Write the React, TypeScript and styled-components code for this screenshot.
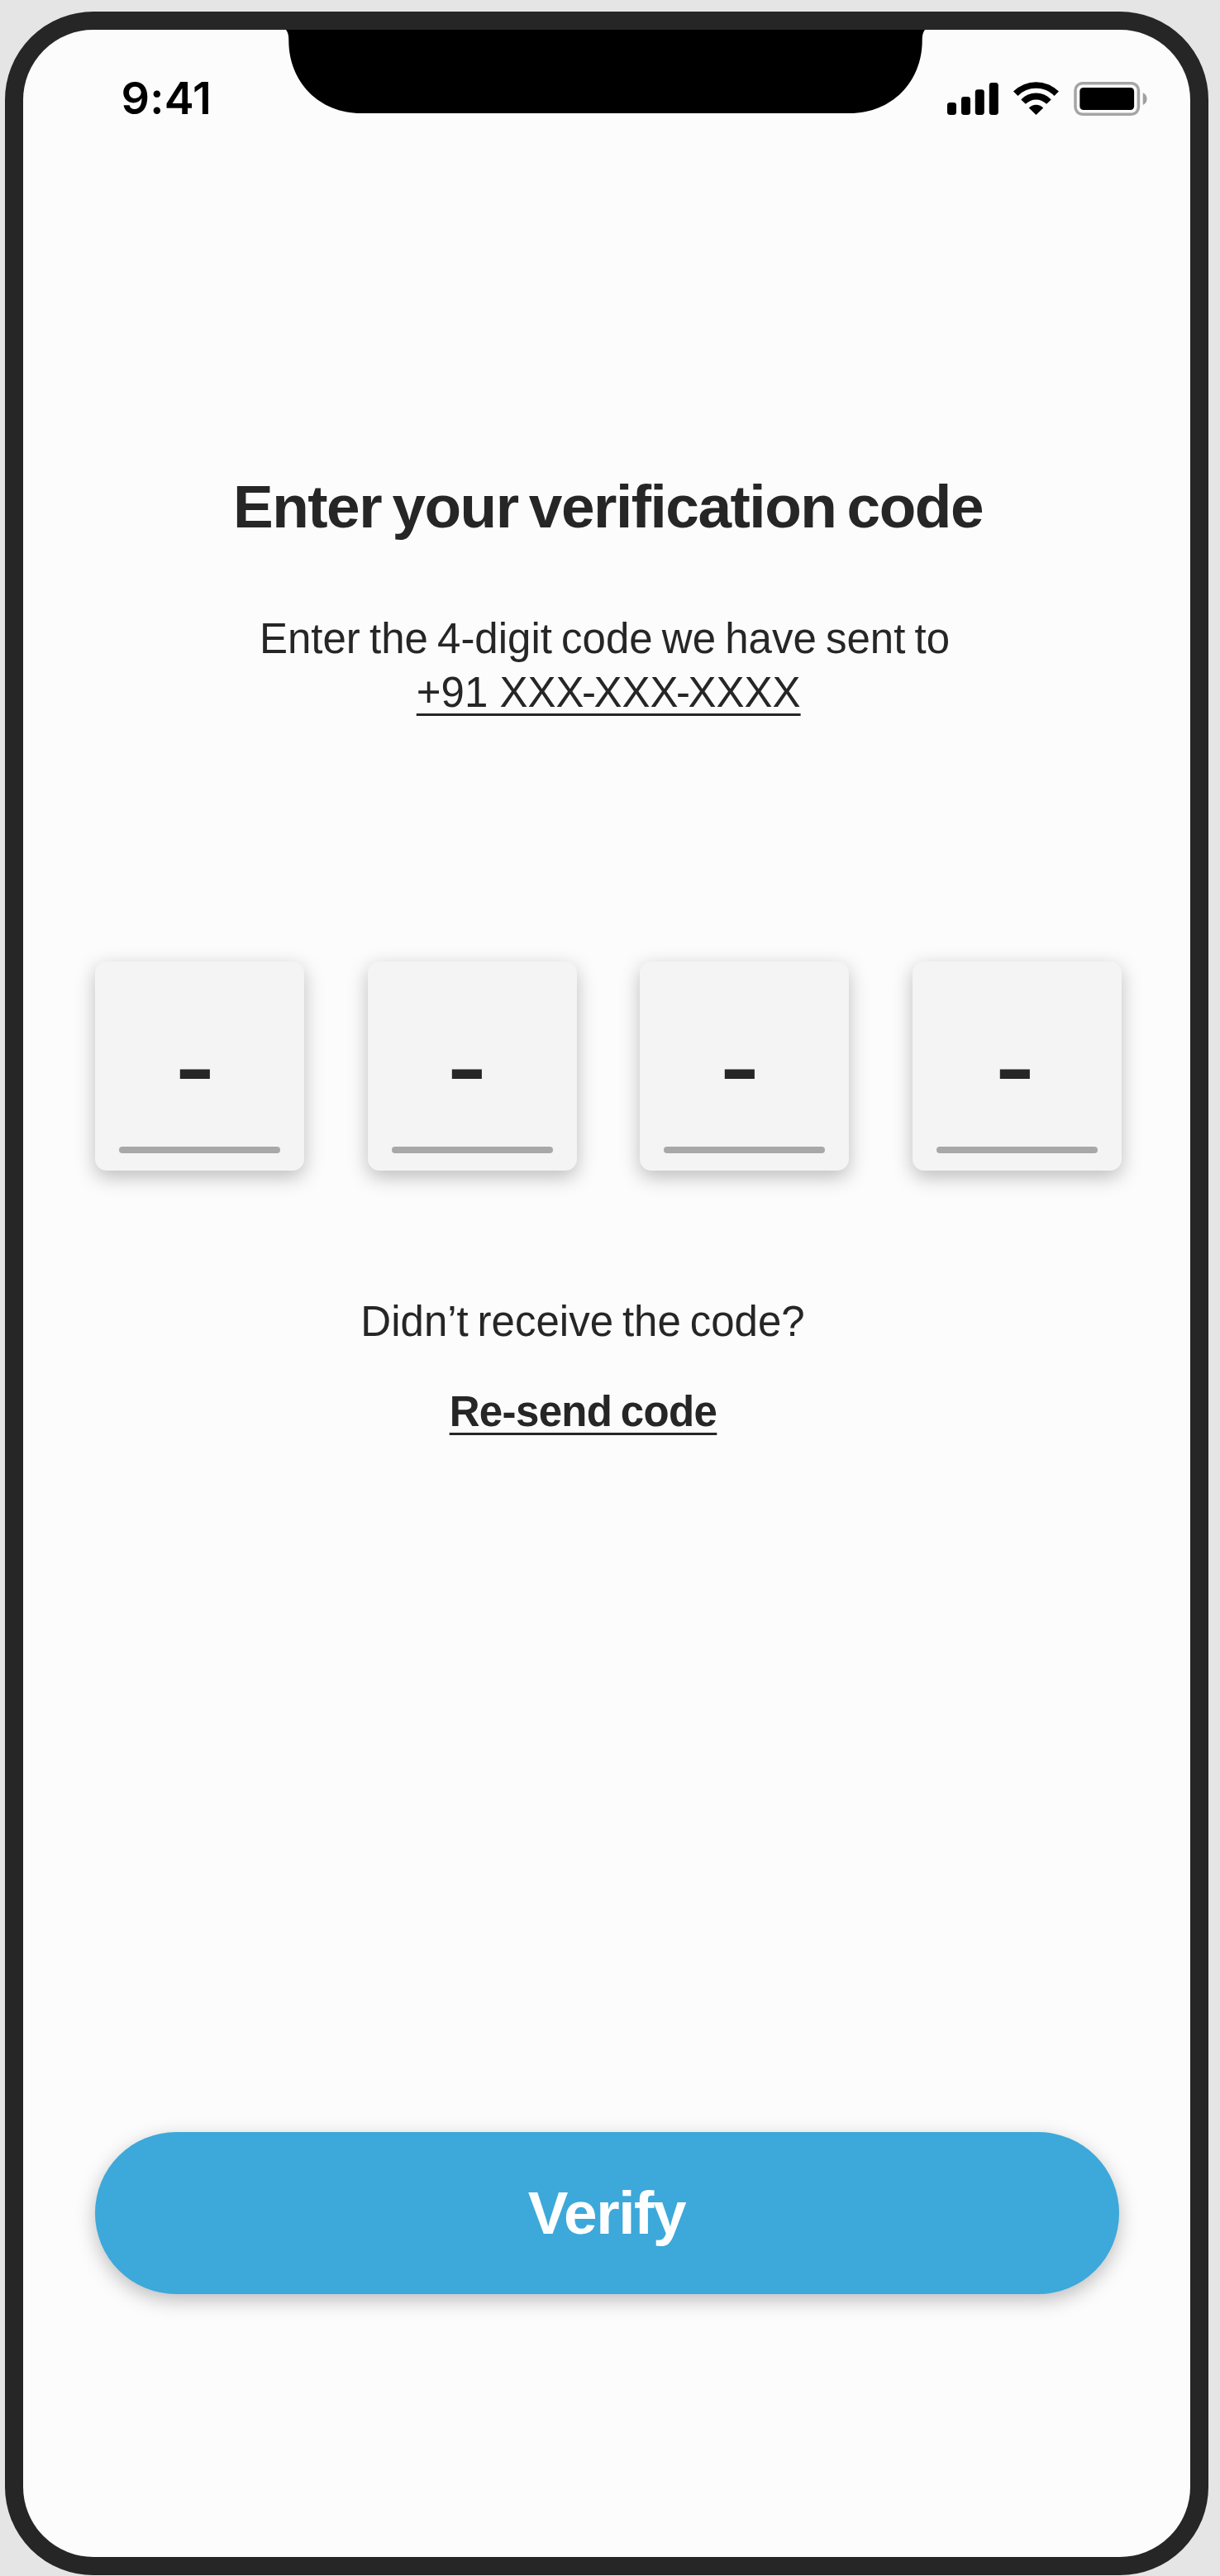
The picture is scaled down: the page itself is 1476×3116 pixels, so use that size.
import React from "react";
import styled, { createGlobalStyle } from "styled-components";

const GlobalStyle = createGlobalStyle`
  *, *::before, *::after { box-sizing: border-box; }
  html, body { margin: 0; padding: 0; background: #e5e5e5; }
  body { font-family: "Liberation Sans", Arial, sans-serif; color: #262626; }
`;

const Page = styled.div`
  width: 1476px;
  height: 3116px;
  padding: 14px 0 0 6px;
  overflow: hidden;
  background: #e5e5e5;
`;

const Phone = styled.main`
  display: flex;
  flex-direction: column;
  width: 1456px;
  height: 3101px;
  border: 22px solid #262626;
  border-radius: 107px;
  background: #fcfcfc;
`;

const StatusBar = styled.header`
  display: grid;
  grid-template-columns: 318px 773px 1fr;
  align-items: start;
  height: 101px;
`;

const Clock = styled.time`
  padding: 51px 0 0 118.5px;
  font: 600 54px/64px Inter, sans-serif;
  font-feature-settings: "calt" 0;
  letter-spacing: 0.2px;
  color: #000;
`;

const NotchShape = styled.svg`
  display: block;
  width: 773px;
  height: 101px;
`;

const StatusIcons = styled.svg`
  display: block;
  width: 243px;
  height: 42px;
  margin: 63px 0 0 27px;
`;

const Intro = styled.section`
  display: flex;
  flex-direction: column;
  align-items: center;
  margin-top: 436px;
`;

const Title = styled.h1`
  margin: 0 0 87px;
  padding-left: 3px;
  font-size: 73px;
  font-weight: 700;
  line-height: 80px;
  letter-spacing: -1.5px;
  word-spacing: -5.5px;
  white-space: nowrap;
`;

const Line = styled.p<{ $shift?: number; $wordSpacing?: number }>`
  margin: 0;
  padding-left: ${({ $shift = 0 }) => Math.max($shift, 0)}px;
  padding-right: ${({ $shift = 0 }) => Math.max(-$shift, 0)}px;
  font-size: 51px;
  line-height: 65.4px;
  word-spacing: ${({ $wordSpacing = 0 }) => $wordSpacing}px;
  white-space: nowrap;
`;

const Underlined = styled.span`
  text-decoration: underline;
  text-decoration-thickness: 2.5px;
  text-underline-offset: 8px;
  text-decoration-skip-ink: none;
`;

const Hyphen = styled.span`
  margin: 0 -2.5px;
`;

const CodeRow = styled.div`
  display: flex;
  justify-content: space-between;
  width: 1242px;
  margin: 292.2px 0 0 87px;
`;

const Digit = styled.div`
  display: flex;
  flex-direction: column;
  align-items: center;
  justify-content: flex-end;
  width: 253px;
  height: 253px;
  padding-bottom: 21px;
  border-radius: 14px;
  background: #f4f4f4;
  box-shadow: 0 7.5px 23px rgba(0, 0, 0, 0.25);
`;

const Dash = styled.span<{ $shift: number }>`
  margin-bottom: 46px;
  margin-right: ${({ $shift }) => $shift * 2}px;
  font-size: 96px;
  font-weight: 700;
  line-height: 100px;
  transform: scaleX(1.48);
`;

const DigitLine = styled.span`
  width: 195px;
  height: 8px;
  border-radius: 4px;
  background: #a8a8a8;
`;

const Resend = styled.section`
  display: flex;
  flex-direction: column;
  align-items: center;
  gap: 44px;
  margin-top: 149.7px;
  padding-right: 57px;
`;

const ResendButton = styled.button`
  padding: 0;
  border: 0;
  background: none;
  color: inherit;
  font: 700 51px/65.4px "Liberation Sans", Arial, sans-serif;
  letter-spacing: -0.65px;
  word-spacing: -3px;
`;

const VerifyButton = styled.button`
  width: 1239px;
  height: 196px;
  margin: 838.5px 0 0 87px;
  padding: 0 1px 0 0;
  border: 0;
  border-radius: 98px;
  background: #3da8da;
  color: #fff;
  font: 700 73px/80px "Liberation Sans", Arial, sans-serif;
  letter-spacing: -1.4px;
  box-shadow: 0 7.5px 23px rgba(0, 0, 0, 0.25);
`;

const dashShifts = [6, 6, 6, 2.6];

function Notch() {
  return (
    <NotchShape viewBox="0 0 773 101">
      <path d="M0 0 C2.5 3 3.3 7 3.3 13 C3.3 63 40 101 91 101 H682 C733 101 769.7 63 769.7 13 C769.7 7 770.5 3 773 0 Z" />
    </NotchShape>
  );
}

function SystemIcons() {
  return (
    <StatusIcons viewBox="0 0 243 42">
      <rect x="0" y="25" width="11" height="15" rx="3.4" />
      <rect x="17" y="18" width="11" height="22" rx="3.4" />
      <rect x="33.8" y="9.2" width="11" height="30.8" rx="3.4" />
      <rect x="50.8" y="1" width="11" height="39" rx="3.4" />
      <path d="M80 11.6 A39.1 39.1 0 0 1 135 11.6 L129.5 17 A30.6 30.6 0 0 0 85.5 17 Z" />
      <path d="M89.3 21.4 A24.7 24.7 0 0 1 125.7 21.4 L120.2 26.8 A17.9 17.9 0 0 0 94.8 26.8 Z" />
      <path d="M98.8 31.6 A11.6 11.6 0 0 1 116.2 31.6 L107.5 40 Z" />
      <rect x="155" y="1.7" width="76.4" height="37.5" rx="8.6" fill="none" stroke="#a5a5a5" strokeWidth="3.5" />
      <rect x="160.3" y="7" width="65.8" height="27" rx="4.5" />
      <path d="M236.7 13.3 C243.2 16 243.2 25.3 236.7 28 Z" fill="#a0a0a0" />
    </StatusIcons>
  );
}

export default function App() {
  return (
    <Page>
      <GlobalStyle />
      <Phone>
        <StatusBar>
          <Clock>9:41</Clock>
          <Notch />
          <SystemIcons />
        </StatusBar>

        <Intro>
          <Title>Enter your verification code</Title>
          <Line $shift={-5} $wordSpacing={-3}>Enter the 4-digit code we have sent to</Line>
          <Line $shift={4.4}>
            <Underlined>
              +91 XXX<Hyphen>-</Hyphen>XXX<Hyphen>-</Hyphen>XXXX
            </Underlined>
          </Line>
        </Intro>

        <CodeRow>
          {dashShifts.map((shift, index) => (
            <Digit key={index}>
              <Dash $shift={shift}>-</Dash>
              <DigitLine />
            </Digit>
          ))}
        </CodeRow>

        <Resend>
          <Line $shift={-1} $wordSpacing={-3.3}>Didn’t receive the code?</Line>
          <ResendButton>
            <Underlined>Re-send code</Underlined>
          </ResendButton>
        </Resend>

        <VerifyButton>Verify</VerifyButton>
      </Phone>
    </Page>
  );
}
